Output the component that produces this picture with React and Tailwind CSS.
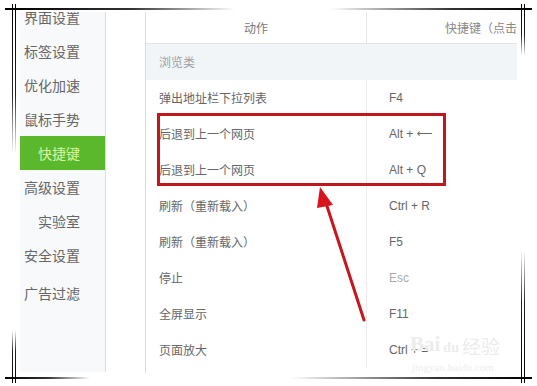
import React from "react";

const sideItems = [
  { t: "界面设置" },
  { t: "标签设置" },
  { t: "优化加速" },
  { t: "鼠标手势" },
  { t: "快捷键", active: true },
  { t: "高级设置" },
  { t: "实验室", indent: true },
  { t: "安全设置" },
  { t: "广告过滤", extra: true },
];

const rows = [
  ["弹出地址栏下拉列表", "F4"],
  ["后退到上一个网页", "Alt + ", "←"],
  ["后退到上一个网页", "Alt + Q"],
  ["刷新（重新载入）", "Ctrl + R"],
  ["刷新（重新载入）", "F5"],
  ["停止", "Esc", null, true],
  ["全屏显示", "F11"],
  ["页面放大", "Ctrl + ="],
];

export default function App() {
  return (
    <div
      className="relative w-[537px] h-[386px] overflow-hidden bg-white"
      style={{ fontFamily: '"Noto Sans CJK SC", "Liberation Sans", sans-serif' }}
    >
      <div className="flex pt-[12px] pl-[20px] h-[372px]">
        {/* Sidebar */}
        <div className="w-[86px] h-[360px] overflow-hidden bg-[#f7f9fb] border-r border-[#dcdcdc]">
          <div className="-mt-[12px] flex flex-col">
            {sideItems.map((it, i) => (
              <div
                key={i}
                className={
                  "h-[34px] flex items-center text-[14px] " +
                  (it.active
                    ? "bg-[#5bb82c] text-[#d8f7a8] pl-[18px] "
                    : it.indent
                    ? "text-[#666] pl-[18px] "
                    : "text-[#666] pl-[4px] ") +
                  (it.extra ? "mt-[4px]" : "")
                }
              >
                {it.t}
              </div>
            ))}
          </div>
        </div>
        {/* Table */}
        <div className="ml-[39px] w-[372px] h-[361px] overflow-hidden border-l border-[#dcdcdc] text-[12px]">
          <div className="flex h-[32px] border-b border-[#e3e6e9]">
            <div className="w-[221px] flex items-center justify-center text-[#777] border-r border-[#e6e6e6]">
              动作
            </div>
            <div className="flex-1 flex items-center justify-end overflow-hidden whitespace-nowrap text-[#888]">
              快捷键（点击
            </div>
          </div>
          <div className="h-[36px] flex items-center bg-[#f1f5f8] pl-[13px] text-[#a0a0a0]">
            浏览类
          </div>
          {rows.map(([a, k, arrow, light], i) => (
            <div key={i} className="flex h-[36px]">
              <div className="w-[221px] flex items-center pl-[13px] text-[#666] border-r border-[#ececec]">
                {a}
              </div>
              <div
                className={
                  "flex-1 flex items-center pl-[22px] whitespace-pre " +
                  (light ? "text-[#aaa]" : "text-[#666]")
                }
                style={{ fontFamily: '"Liberation Sans", "Noto Sans CJK SC", sans-serif' }}
              >
                {k}
                {arrow && (
                  <span className="text-[11px]" style={{ fontFamily: '"DejaVu Sans", sans-serif' }}>
                    ⟵
                  </span>
                )}
              </div>
            </div>
          ))}
        </div>
      </div>

      {/* Watermark */}
      <div className="absolute left-[410px] top-[334px] flex items-end gap-[3px] text-[#ececec] leading-none pointer-events-none">
        <span className="text-[21px] font-bold" style={{ fontFamily: '"Liberation Serif", serif' }}>Bai</span>
        <span className="text-[14px] font-bold" style={{ fontFamily: '"Liberation Serif", serif' }}>du</span>
        <span className="text-[19px]">经验</span>
      </div>
      <div
        className="absolute left-[412px] top-[362px] text-[11px] text-[#eeeeee] leading-none"
        style={{ fontFamily: '"Liberation Serif", serif' }}
      >
        jingyan.baidu.com
      </div>

      {/* Red highlight box */}
      <div className="absolute left-[157px] top-[113px] w-[289px] h-[73px] border-[3px] border-[#c3161c]" />

      {/* Arrow */}
      <svg className="absolute left-0 top-0" width="537" height="386">
        <line x1="364" y1="320" x2="325" y2="200" stroke="#c8161d" strokeWidth="3" strokeLinecap="round" />
        <polygon points="320,187 333,205 317,208" fill="#d9141c" />
      </svg>

      {/* Frame lines */}
      <div className="absolute left-[5px] top-[8px] w-[230px] h-[2px] bg-[linear-gradient(to_right,#000_0%,#333_55%,rgba(255,255,255,0)_100%)]" />
      <div className="absolute left-[330px] top-[8px] w-[202px] h-[2px] bg-[linear-gradient(to_left,#000_0%,#333_40%,rgba(255,255,255,0)_100%)]" />
      <div className="absolute left-[5px] top-[377px] w-[85px] h-[2px] bg-[linear-gradient(to_right,#000_0%,#333_50%,rgba(255,255,255,0)_100%)]" />
      <div className="absolute left-[290px] top-[377px] w-[242px] h-[2px] bg-[linear-gradient(to_left,#000_0%,#333_40%,rgba(255,255,255,0)_100%)]" />

      <div className="absolute left-[12px] top-[4px] w-[1px] h-[150px] bg-[linear-gradient(to_bottom,#000_0%,#222_60%,rgba(255,255,255,0)_100%)]" />
      <div className="absolute left-[15px] top-[4px] w-[1px] h-[150px] bg-[linear-gradient(to_bottom,#000_0%,#222_60%,rgba(255,255,255,0)_100%)]" />
      <div className="absolute left-[12px] top-[330px] w-[1px] h-[53px] bg-[linear-gradient(to_top,#000_0%,#222_60%,rgba(255,255,255,0)_100%)]" />
      <div className="absolute left-[15px] top-[330px] w-[1px] h-[53px] bg-[linear-gradient(to_top,#000_0%,#222_60%,rgba(255,255,255,0)_100%)]" />

      <div className="absolute left-[521px] top-[4px] w-[1px] h-[52px] bg-[linear-gradient(to_bottom,#000_0%,#222_60%,rgba(255,255,255,0)_100%)]" />
      <div className="absolute left-[524px] top-[4px] w-[1px] h-[52px] bg-[linear-gradient(to_bottom,#000_0%,#222_60%,rgba(255,255,255,0)_100%)]" />
      <div className="absolute left-[521px] top-[250px] w-[1px] h-[133px] bg-[linear-gradient(to_top,#000_0%,#222_60%,rgba(255,255,255,0)_100%)]" />
      <div className="absolute left-[524px] top-[250px] w-[1px] h-[133px] bg-[linear-gradient(to_top,#000_0%,#222_60%,rgba(255,255,255,0)_100%)]" />
    </div>
  );
}
